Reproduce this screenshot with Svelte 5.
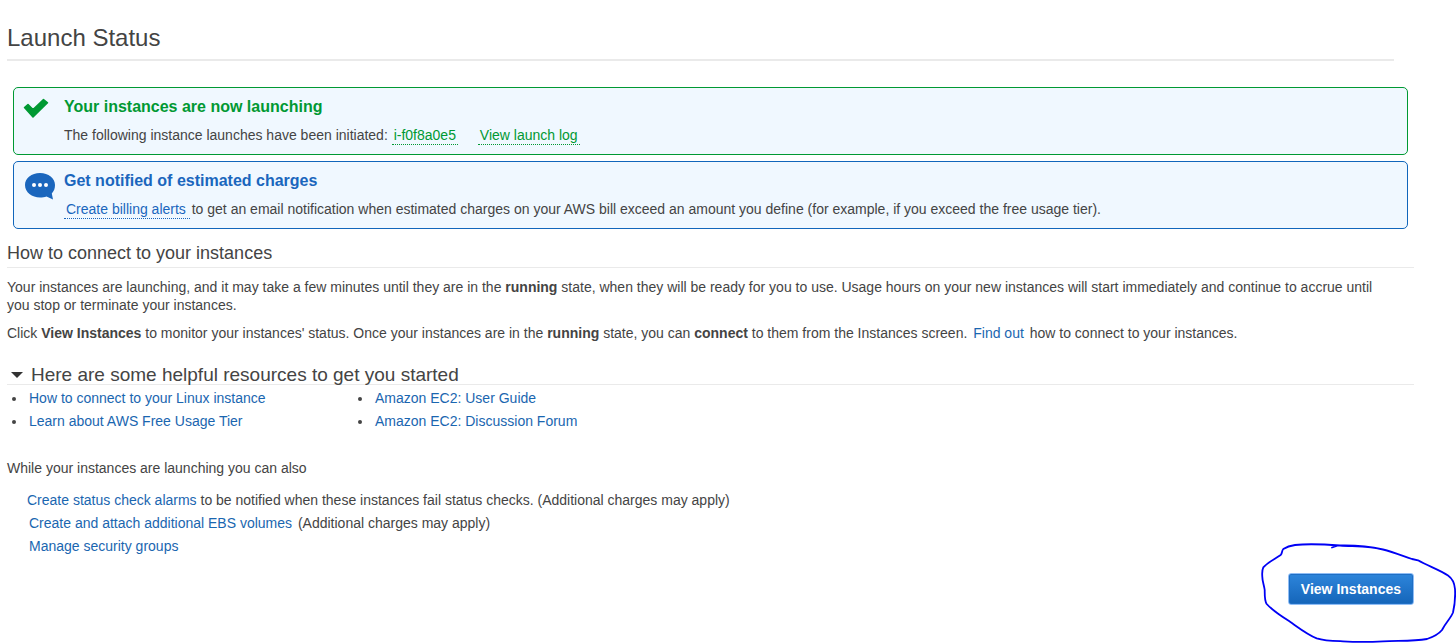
<script>
  let open = $state(true);

  const resources = [
    'How to connect to your Linux instance',
    'Amazon EC2: User Guide',
    'Learn about AWS Free Usage Tier',
    'Amazon EC2: Discussion Forum'
  ];
</script>

<main>
  <h1>Launch Status</h1>

  <div class="alerts">
    <section class="alert success">
      <svg class="icon" width="32" height="32" viewBox="0 0 32 32" aria-hidden="true">
        <path d="M1.500 11.500 L5 8.500 L10 13.500 L20.500 3.500 L24.500 6.800 L10 21 Z" fill="#009933" stroke="#009933" stroke-width="1.500" stroke-linejoin="round" />
      </svg>
      <div>
        <h2>Your instances are now launching</h2>
        <p>
          The following instance launches have been initiated:
          <a class="dotted" href="#instance">i-f0f8a0e5</a>
          <a class="dotted log" href="#log">View launch log</a>
        </p>
      </div>
    </section>

    <section class="alert info">
      <svg class="icon" width="32" height="32" viewBox="0 0 32 32" aria-hidden="true">
        <path d="M17 3 C8.500 3 2 8 2 15 C2 22.500 9 27.500 17 27.500 C19.500 27.500 21.500 27.300 23.500 26.500 L30 29.500 L28.800 23.500 C31 21 32 18.500 32 15 C32 8 25.500 3 17 3 Z" fill="#1a66bd" />
        <circle cx="11" cy="15" r="2" fill="#fff" />
        <circle cx="17" cy="15" r="2" fill="#fff" />
        <circle cx="23" cy="15" r="2" fill="#fff" />
      </svg>
      <div>
        <h2>Get notified of estimated charges</h2>
        <p><a class="dotted billing" href="#billing">Create billing alerts</a> to get an email notification when estimated charges on your AWS bill exceed an amount you define (for example, if you exceed the free usage tier).</p>
      </div>
    </section>
  </div>

  <h2 class="heading">How to connect to your instances</h2>
  <p class="para">Your instances are launching, and it may take a few minutes until they are in the <b>running</b> state, when they will be ready for you to use. Usage hours on your new instances will start immediately and continue to accrue until you stop or terminate your instances.</p>
  <p class="para">Click <b>View Instances</b> to monitor your instances' status. Once your instances are in the <b>running</b> state, you can <b>connect</b> to them from the Instances screen. <a class="spaced" href="#find-out">Find out</a> how to connect to your instances.</p>

  <h2 class="resources-heading">
    <button class="toggle" aria-expanded={open} onclick={() => (open = !open)}>
      <svg class:closed={!open} width="12" height="6" viewBox="0 0 12 6" aria-hidden="true"><path d="M0 0 H12 L6 6 Z" fill="#333" /></svg>
      Here are some helpful resources to get you started
    </button>
  </h2>
  {#if open}
    <ul class="resources">
      {#each resources as item}
        <li><a href="#resource">{item}</a></li>
      {/each}
    </ul>
  {/if}

  <p class="also">While your instances are launching you can also</p>
  <ul class="tasks">
    <li><a href="#alarms">Create status check alarms</a> to be notified when these instances fail status checks. (Additional charges may apply)</li>
    <li><a class="spaced" href="#volumes">Create and attach additional EBS volumes</a> (Additional charges may apply)</li>
    <li><a class="spaced" href="#groups">Manage security groups</a></li>
  </ul>

  <footer>
    <div class="marked">
      <button class="primary">View Instances</button>
      <svg class="scribble" width="198" height="104" viewBox="0 0 198 104" fill="none" stroke="#0000f5" stroke-width="1.800" stroke-linecap="round" stroke-linejoin="round" aria-hidden="true">
        <path d="M74 7.500 L80 5.500 C96 5 112 6.500 125 9.500 C135 12 145 16 154 19 L160 20.300 C170 26 182 30 190 35.500 C195 39 196.500 43 197 49 C197.500 58 197 64 195 72.500 C193 78 188 82 184 90 C180 95 175 97 169 99 C155 101.500 140 100.500 125 101.300 C111 102 98 102 85 101.300 C76 101 67 101 58.700 98.300 C50 95 41 88 32 81.700 C23 76 15 71 8.700 64 C6.500 61 6.700 54 6.700 50 C6 45 4.300 41 4.300 36.700 C4 33 4 30 5.300 27.300 C10 22 17 19 22.700 15 C24.500 13 23.500 11 25.300 9 C29 6.500 33 5.500 37 5 C51 3.500 66 4.300 82 5.500 C98 6.500 113 6 125 9.500" />
      </svg>
    </div>
  </footer>
</main>

<style>
  :global(body) {
    margin: 0;
    background: #fff;
  }

  main {
    padding: 24px 42px 39px 7px;
    font: 14px/18px "Liberation Sans", Arial, sans-serif;
    color: #444;
  }

  h1, h2, p, ul {
    margin: 0;
    padding: 0;
    font-weight: normal;
  }

  a {
    color: #1a66b0;
    text-decoration: none;
  }

  h1 {
    margin-right: 20px;
    padding-bottom: 7px;
    border-bottom: 2px solid #eaeaea;
    font-size: 24px;
    line-height: 28px;
  }

  .alerts {
    display: flex;
    flex-direction: column;
    gap: 6px;
    margin: 26px 6px 14px;
  }

  .alert {
    display: flex;
    gap: 9px;
    padding: 8px 10px 10px 9px;
    border: 1px solid;
    border-radius: 5px;
    background: #f0f8ff;
  }

  .icon {
    flex: none;
  }

  .alert h2 {
    margin-bottom: 8px;
    font-size: 16px;
    line-height: 22px;
    font-weight: bold;
  }

  .success {
    border-color: #009933;
  }

  .info {
    border-color: #1166bb;
  }

  .success h2, .success a {
    color: #009933;
  }

  .info h2, .info a {
    color: #1a66bd;
  }

  .dotted {
    padding: 0 2px 1px;
    border-bottom: 1px dotted;
  }

  .log {
    margin-left: 16px;
  }

  .billing {
    padding-right: 4px;
    margin-right: -2px;
  }

  .heading {
    padding-bottom: 4px;
    margin-bottom: 10px;
    border-bottom: 1px solid #eaeaea;
    font-size: 18px;
    line-height: 20px;
  }

  .para {
    margin: 0 24px 10px 0;
  }

  .spaced {
    padding: 0 2px;
  }

  .resources-heading {
    margin-top: 22px;
    border-bottom: 1px solid #eaeaea;
    font-size: 19px;
    line-height: 20px;
  }

  .toggle {
    display: flex;
    align-items: center;
    gap: 8px;
    height: 20px;
    padding: 1px 0 0 4px;
    border: 0;
    background: none;
    color: inherit;
    font: inherit;
    line-height: 20px;
  }

  .closed {
    transform: rotate(-90deg);
  }

  .resources {
    display: grid;
    grid-template-columns: 346px 1fr;
    margin: 2px 0 26px 20px;
    line-height: 23px;
  }

  .resources li {
    padding-left: 2px;
  }

  .tasks {
    margin: 12px 0 15px 20px;
    list-style: none;
    line-height: 23px;
  }

  footer {
    display: flex;
    justify-content: flex-end;
  }

  .marked {
    position: relative;
  }

  .primary {
    display: block;
    height: 32px;
    padding: 0 12px;
    border: 1px solid #8fbdf5;
    border-radius: 3px;
    background: linear-gradient(#2e86dc, #1464b8) border-box;
    box-shadow: inset 0 0 0 1px #1f6fc4;
    color: #fff;
    font: bold 14px/18px "Liberation Sans", Arial, sans-serif;
  }

  .scribble {
    position: absolute;
    right: -42px;
    top: -33px;
    pointer-events: none;
  }
</style>
